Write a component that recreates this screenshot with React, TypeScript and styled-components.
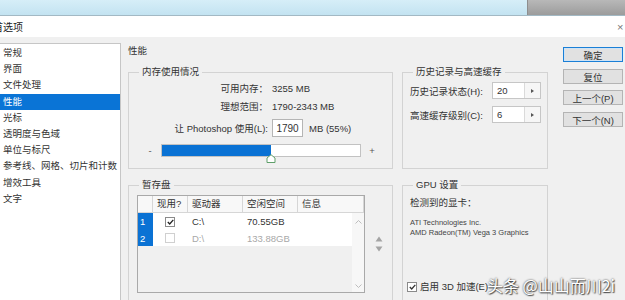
import { Fragment } from 'react';
import styled, { createGlobalStyle } from 'styled-components';

const GlobalStyle = createGlobalStyle`
  html, body {
    margin: 0;
    padding: 0;
  }
  body {
    font-family: "Liberation Sans", "Noto Sans CJK SC", sans-serif;
    font-size: 9.5px;
    color: #333;
    background: #f0f0f0;
  }
`;

const Page = styled.div`
  position: relative;
  width: 625px;
  height: 300px;
  overflow: hidden;
  display: flex;
  flex-direction: column;
  background: #f0f0f0;
`;

const TopStrip = styled.div`
  height: 15px;
  display: flex;
  border-bottom: 1px solid #a3b9c4;
`;

const SkyArea = styled.div`
  flex: 1;
  background: linear-gradient(#d6eef8, #c3e3f1);
`;

const GreyArea = styled.div`
  width: 97px;
  border-left: 1px solid #8e8e8e;
  background: linear-gradient(#b8b8b8, #9c9c9c);
`;

const TitleBar = styled.div`
  height: 21px;
  display: flex;
  align-items: center;
  justify-content: space-between;
  background: #fff;
`;

const Title = styled.span`
  margin-left: -7px;
  font-size: 10px;
  color: #222;
`;

const CloseGlyph = styled.span`
  width: 8px;
  font-size: 11px;
  color: #777;
`;

const Body = styled.div`
  flex: 1;
  min-height: 0;
  display: flex;
  align-items: stretch;
`;

const Sidebar = styled.ul`
  list-style: none;
  width: 122px;
  box-sizing: border-box;
  margin: 6px 0 -30px -1px;
  padding: 1px 0 0;
  background: #fff;
  border: 1px solid #c6c6c6;
`;

const SidebarItem = styled.li<{ $active?: boolean }>`
  height: 16.2px;
  line-height: 16.2px;
  padding-left: 3px;
  white-space: nowrap;
  background: ${p => (p.$active ? '#0a74d6' : 'transparent')};
  color: ${p => (p.$active ? '#fff' : '#333')};
`;

const Main = styled.div`
  width: 420px;
  margin-left: 7px;
  padding-top: 6px;
  display: flex;
  flex-direction: column;
`;

const Heading = styled.div`
  line-height: 16px;
`;

const Panels = styled.div`
  margin-top: 7px;
  display: grid;
  grid-template-columns: 265px 146px;
  grid-template-rows: 103px 140px;
  column-gap: 9px;
  row-gap: 10px;
`;

const Group = styled.fieldset`
  margin: 0;
  padding: 0;
  min-width: 0;
  border: 1px solid #d3d3d3;
`;

const GroupTitle = styled.legend`
  margin-left: 10px;
  padding: 0 3px;
  line-height: 12px;
  color: #333;
`;

const InfoGrid = styled.div`
  padding-top: 1px;
  display: grid;
  grid-template-columns: 139px auto;
  grid-template-rows: 18px 18px 26px;
  column-gap: 4px;
  align-items: center;
`;

const InfoLabel = styled.span`
  justify-self: end;
  white-space: nowrap;
`;

const InfoValue = styled.span`
  display: flex;
  align-items: center;
  gap: 6px;
  white-space: nowrap;
`;

const NumberBox = styled.span`
  width: 31px;
  height: 18px;
  box-sizing: border-box;
  border: 1px solid #b5b5b5;
  background: #fff;
  display: flex;
  align-items: center;
  justify-content: center;
  font-size: 10px;
`;

const SliderRow = styled.div`
  margin-top: 3px;
  padding-left: 16px;
  display: flex;
  align-items: center;
  gap: 6px;
`;

const SliderSign = styled.span`
  width: 10px;
  text-align: center;
  color: #555;
`;

const Track = styled.div`
  position: relative;
  width: 200px;
  height: 13px;
  box-sizing: border-box;
  border: 1px solid #c2c2c2;
  background: #fff;
`;

const TrackFill = styled.div<{ $percent: number }>`
  width: ${p => p.$percent}%;
  height: 100%;
  background: #0a72d4;
`;

const Thumb = styled.svg<{ $percent: number }>`
  position: absolute;
  left: ${p => p.$percent}%;
  bottom: -7px;
  transform: translateX(-50%);
`;

const FieldGrid = styled.div`
  padding: 4px 0 0 7px;
  display: grid;
  grid-template-columns: 82px 49px;
  grid-auto-rows: 17px;
  row-gap: 7px;
  align-items: center;
`;

const FieldLabel = styled.span`
  white-space: nowrap;
`;

const SpinField = styled.div`
  height: 17px;
  box-sizing: border-box;
  display: flex;
  border: 1px solid #c6c6c6;
  background: #fff;
`;

const SpinValue = styled.span`
  flex: 1;
  padding-left: 4px;
  line-height: 15px;
`;

const SpinButton = styled.span`
  width: 15px;
  border-left: 1px solid #dadada;
  background: #f6f6f6;
  display: flex;
  align-items: center;
  justify-content: center;

  &::after {
    content: '';
    border-left: 3px solid #555;
    border-top: 2.5px solid transparent;
    border-bottom: 2.5px solid transparent;
  }
`;

const ScratchBody = styled.div`
  padding: 4px 0 0 8px;
  display: flex;
  align-items: flex-start;
`;

const DiskGrid = styled.div`
  width: 226px;
  border: 1px solid #a9a9a9;
  display: grid;
  grid-template-columns: 15px 35px 55px 55px 54px 12px;
  grid-template-rows: 17px 17px 16px 46px;
  background: #f0f0f0;
`;

const HeadCell = styled.div<{ $span?: number }>`
  grid-column: span ${p => p.$span ?? 1};
  padding-left: 4px;
  line-height: 16px;
  background: #f8f8f8;
  border-right: 1px solid #d6d6d6;
  border-bottom: 1px solid #d6d6d6;
  white-space: nowrap;
  &:last-of-type {
    border-right: none;
  }
`;

const IndexCell = styled.div`
  padding-left: 2px;
  background: #0a72d4;
  color: #fff;
  display: flex;
  align-items: center;
`;

const RowCell = styled.div<{ $muted?: boolean }>`
  padding-left: 4px;
  background: #fff;
  color: ${p => (p.$muted ? '#a8a8a8' : '#333')};
  display: flex;
  align-items: center;
  white-space: nowrap;
`;

const CheckCell = styled(RowCell)`
  padding-left: 12px;
`;

const CheckBox = styled.span<{ $muted?: boolean }>`
  width: 8px;
  height: 8px;
  border: 1px solid ${p => (p.$muted ? '#d0d0d0' : '#8a8a8a')};
  background: #fff;
  display: flex;
  align-items: center;
  justify-content: center;
`;

const ScrollColumn = styled.div`
  grid-column: 6;
  grid-row: 2 / 5;
  background: #f7f7f7;
  display: flex;
  flex-direction: column;
  justify-content: space-between;
  align-items: center;
  padding: 7px 0 4px;
`;

const MoveArrows = styled.div`
  margin-left: 10px;
  height: 98px;
  display: flex;
  flex-direction: column;
  justify-content: center;
  gap: 4px;
`;

const GpuBody = styled.div`
  padding: 6px 0 0 7px;
  display: flex;
  flex-direction: column;
`;

const GpuLine = styled.div`
  line-height: 12px;
`;

const GpuDetails = styled.div`
  margin-top: 9px;
  font-size: 7.5px;
  line-height: 9.5px;
  color: #444;
  white-space: nowrap;
`;

const AccelRow = styled.label`
  margin: 44px 0 0 -3px;
  display: flex;
  align-items: center;
  gap: 3px;
  line-height: 12px;
`;

const Buttons = styled.div`
  width: 60px;
  margin-left: 15px;
  padding-top: 10px;
  display: flex;
  flex-direction: column;
  gap: 6.5px;
`;

const DialogButton = styled.button<{ $primary?: boolean }>`
  height: 15px;
  padding: 0;
  font: inherit;
  font-size: 9.5px;
  color: #333;
  background: #e1e1e1;
  border: 1px solid ${p => (p.$primary ? '#1a7fd6' : '#b4b4b4')};
  box-shadow: ${p => (p.$primary ? 'inset 0 0 0 1px #cfe3f5' : 'none')};
`;

const Watermark = styled.div`
  position: absolute;
  left: 487px;
  top: 276px;
  font-family: "Noto Sans CJK SC", sans-serif;
  font-size: 16px;
  line-height: 18px;
  color: #fff;
  white-space: nowrap;
  text-shadow: 0 0 2px rgba(0, 0, 0, 0.85), 1px 1px 1px rgba(0, 0, 0, 0.6);
`;

const sections = [
  '常规',
  '界面',
  '文件处理',
  '性能',
  '光标',
  '透明度与色域',
  '单位与标尺',
  '参考线、网格、切片和计数',
  '增效工具',
  '文字',
];

const disks = [
  { id: 1, active: true, drive: 'C:\\', free: '70.55GB' },
  { id: 2, active: false, drive: 'D:\\', free: '133.88GB' },
];

const usePercent = 55;

const Tick = ({ color = '#222' }: { color?: string }) => (
  <svg width="7" height="6" viewBox="0 0 7 6">
    <path d="M0.8 3 L2.7 5 L6.3 0.8" fill="none" stroke={color} strokeWidth="1.3" />
  </svg>
);

const Chevron = ({ up }: { up?: boolean }) => (
  <svg width="7" height="4" viewBox="0 0 7 4">
    <path d={up ? 'M0.5 3.5 L3.5 0.5 L6.5 3.5' : 'M0.5 0.5 L3.5 3.5 L6.5 0.5'} fill="none" stroke="#bdbdbd" strokeWidth="1" />
  </svg>
);

const Triangle = ({ up }: { up?: boolean }) => (
  <svg width="8" height="6" viewBox="0 0 8 6">
    <path d={up ? 'M4 0.5 L7.5 5.5 L0.5 5.5 Z' : 'M0.5 0.5 L7.5 0.5 L4 5.5 Z'} fill="#a4a4a4" />
  </svg>
);

export default function App() {
  return (
    <>
      <GlobalStyle />
      <Page>
        <TopStrip>
          <SkyArea />
          <GreyArea />
        </TopStrip>
        <TitleBar>
          <Title>首选项</Title>
          <CloseGlyph>×</CloseGlyph>
        </TitleBar>
        <Body>
          <Sidebar>
            {sections.map(s => (
              <SidebarItem key={s} $active={s === '性能'}>
                {s}
              </SidebarItem>
            ))}
          </Sidebar>

          <Main>
            <Heading>性能</Heading>
            <Panels>
              <Group>
                <GroupTitle>内存使用情况</GroupTitle>
                <InfoGrid>
                  <InfoLabel>可用内存：</InfoLabel>
                  <InfoValue>3255 MB</InfoValue>
                  <InfoLabel>理想范围：</InfoLabel>
                  <InfoValue>1790-2343 MB</InfoValue>
                  <InfoLabel>让 Photoshop 使用(L):</InfoLabel>
                  <InfoValue>
                    <NumberBox>1790</NumberBox>
                    MB ({usePercent}%)
                  </InfoValue>
                </InfoGrid>
                <SliderRow>
                  <SliderSign>-</SliderSign>
                  <Track>
                    <TrackFill $percent={usePercent} />
                    <Thumb $percent={usePercent} width="10" height="9" viewBox="0 0 10 9">
                      <path d="M1 8.5 L1 4 L5 0.7 L9 4 L9 8.5 Z" fill="#fff" stroke="#5f9f6a" strokeWidth="1" />
                    </Thumb>
                  </Track>
                  <SliderSign>+</SliderSign>
                </SliderRow>
              </Group>

              <Group>
                <GroupTitle>历史记录与高速缓存</GroupTitle>
                <FieldGrid>
                  <FieldLabel>历史记录状态(H):</FieldLabel>
                  <SpinField>
                    <SpinValue>20</SpinValue>
                    <SpinButton />
                  </SpinField>
                  <FieldLabel>高速缓存级别(C):</FieldLabel>
                  <SpinField>
                    <SpinValue>6</SpinValue>
                    <SpinButton />
                  </SpinField>
                </FieldGrid>
              </Group>

              <Group>
                <GroupTitle>暂存盘</GroupTitle>
                <ScratchBody>
                  <DiskGrid>
                    <HeadCell />
                    <HeadCell>现用?</HeadCell>
                    <HeadCell>驱动器</HeadCell>
                    <HeadCell>空闲空间</HeadCell>
                    <HeadCell $span={2}>信息</HeadCell>
                    {disks.map(d => (
                      <Fragment key={d.id}>
                        <IndexCell>{d.id}</IndexCell>
                        <CheckCell>
                          <CheckBox $muted={!d.active}>{d.active && <Tick />}</CheckBox>
                        </CheckCell>
                        <RowCell $muted={!d.active}>{d.drive}</RowCell>
                        <RowCell $muted={!d.active}>{d.free}</RowCell>
                        <RowCell />
                      </Fragment>
                    ))}
                    <ScrollColumn>
                      <Chevron up />
                      <Chevron />
                    </ScrollColumn>
                  </DiskGrid>
                  <MoveArrows>
                    <Triangle up />
                    <Triangle />
                  </MoveArrows>
                </ScratchBody>
              </Group>

              <Group>
                <GroupTitle>GPU 设置</GroupTitle>
                <GpuBody>
                  <GpuLine>检测到的显卡：</GpuLine>
                  <GpuDetails>
                    ATI Technologies Inc.
                    <br />
                    AMD Radeon(TM) Vega 3 Graphics
                  </GpuDetails>
                  <AccelRow>
                    <CheckBox>
                      <Tick color="#333" />
                    </CheckBox>
                    启用 3D 加速(E)
                  </AccelRow>
                </GpuBody>
              </Group>
            </Panels>
          </Main>

          <Buttons>
            <DialogButton $primary>确定</DialogButton>
            <DialogButton>复位</DialogButton>
            <DialogButton>上一个(P)</DialogButton>
            <DialogButton>下一个(N)</DialogButton>
          </Buttons>
        </Body>
        <Watermark>头条 @山山而川2i</Watermark>
      </Page>
    </>
  );
}
